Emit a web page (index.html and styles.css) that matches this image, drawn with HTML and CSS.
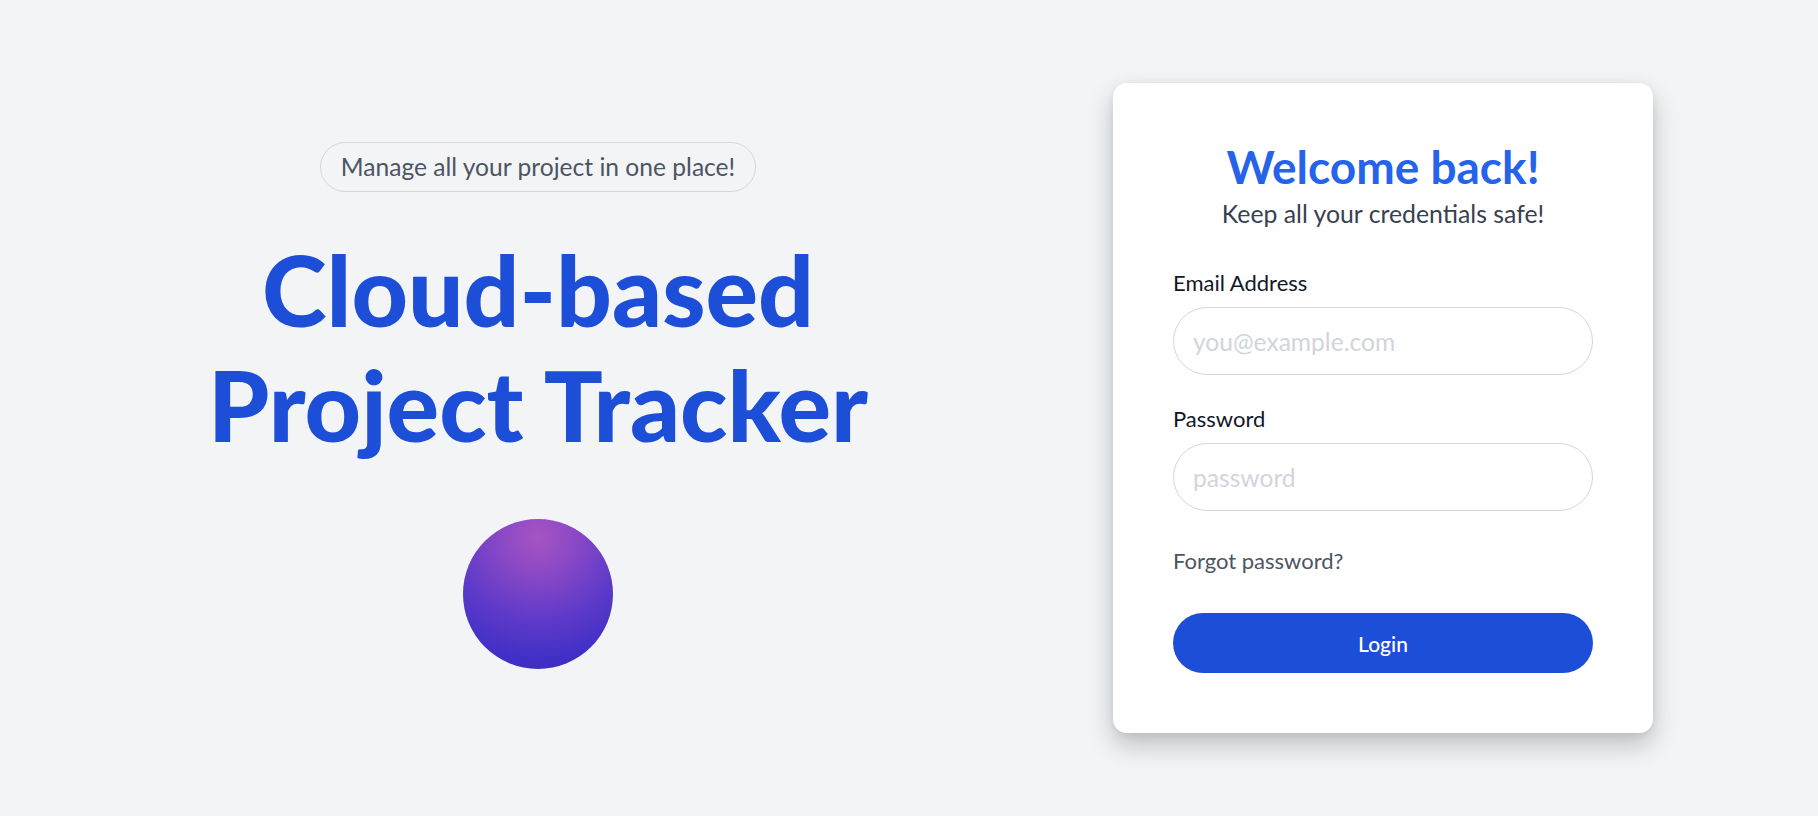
FILE: index.html
```html
<!DOCTYPE html>
<html lang="en">
<head>
<meta charset="utf-8">
<title>Cloud-based Project Tracker</title>
<link rel="stylesheet" href="styles.css">
</head>
<body>
<main class="page">
  <section class="hero">
    <span class="badge">Manage all your project in one place!</span>
    <h1 class="hero-title">Cloud-based<br>Project Tracker</h1>
    <div class="orb"></div>
  </section>
  <section class="card">
    <div class="card-head">
      <h2 class="card-title">Welcome back!</h2>
      <p class="card-sub">Keep all your credentials safe!</p>
    </div>
    <form class="form">
      <div class="field">
        <label class="label" for="email">Email Address</label>
        <input class="input" id="email" type="email" placeholder="you@example.com">
      </div>
      <div class="field field-second">
        <label class="label" for="password">Password</label>
        <input class="input" id="password" type="password" placeholder="password">
      </div>
      <a class="forgot" href="#">Forgot password?</a>
      <button class="btn" type="button">Login</button>
    </form>
  </section>
</main>
</body>
</html>
```
FILE: styles.css
```css
* { box-sizing: border-box; }

html, body {
  margin: 0;
  padding: 0;
}

body {
  background: #f3f4f6;
  font-family: "Lato", "Noto Sans", sans-serif;
  color: #1f2937;
}

.page {
  display: flex;
  align-items: center;
  min-height: 100vh;
}

.hero {
  flex: 1;
  display: flex;
  flex-direction: column;
  align-items: center;
  padding-bottom: 5px;
}

.badge {
  display: inline-block;
  border: 1px solid #d4d6db;
  border-radius: 9999px;
  padding: 10px 20px;
  font-size: 24.6px;
  line-height: 28px;
  color: #4b5563;
}

.hero-title {
  margin: 40px 0 0;
  font-size: 98px;
  line-height: 115px;
  font-weight: 900;
  color: #1d4ed8;
  text-align: center;
}

.orb {
  width: 150px;
  height: 150px;
  margin-top: 57px;
  border-radius: 50%;
  background: radial-gradient(circle at 50% 12%, #a654c2 0%, #8a48c6 25%, #5e3ac9 55%, #4230c6 80%, #3a2bc2 100%);
}

.card {
  width: 540px;
  margin: 0 165px 0 37px;
  padding: 60px;
  background: #ffffff;
  border-radius: 14px;
  box-shadow: 0 12px 26px rgba(0, 0, 0, 0.22), 0 2px 8px rgba(0, 0, 0, 0.06);
}

.card-head {
  text-align: center;
}

.card-title {
  margin: 0;
  font-size: 46px;
  line-height: 48px;
  font-weight: 700;
  color: #2563eb;
}

.card-sub {
  margin: 9px 0 0;
  font-size: 24.8px;
  line-height: 28px;
  color: #374151;
}

.form {
  display: flex;
  flex-direction: column;
  margin-top: 43px;
}

.field {
  display: flex;
  flex-direction: column;
  gap: 12px;
}

.field-second {
  margin-top: 32px;
}

.label {
  font-size: 22px;
  line-height: 24px;
  color: #111827;
}

.input {
  height: 68px;
  width: 100%;
  border: 1px solid #d4d6db;
  border-radius: 9999px;
  padding: 0 19px;
  font-family: inherit;
  font-size: 24.6px;
  color: #111827;
  background: #ffffff;
  outline: none;
}

.input::placeholder {
  color: #d1d5db;
}

.forgot {
  margin-top: 38px;
  font-size: 22px;
  line-height: 24px;
  color: #4b5563;
  text-decoration: none;
  align-self: flex-start;
}

.btn {
  margin-top: 40px;
  height: 60px;
  width: 100%;
  border: none;
  border-radius: 9999px;
  background: #1d4ed8;
  color: #ffffff;
  font-family: inherit;
  font-size: 21px;
  font-weight: 500;
  cursor: pointer;
}
```
